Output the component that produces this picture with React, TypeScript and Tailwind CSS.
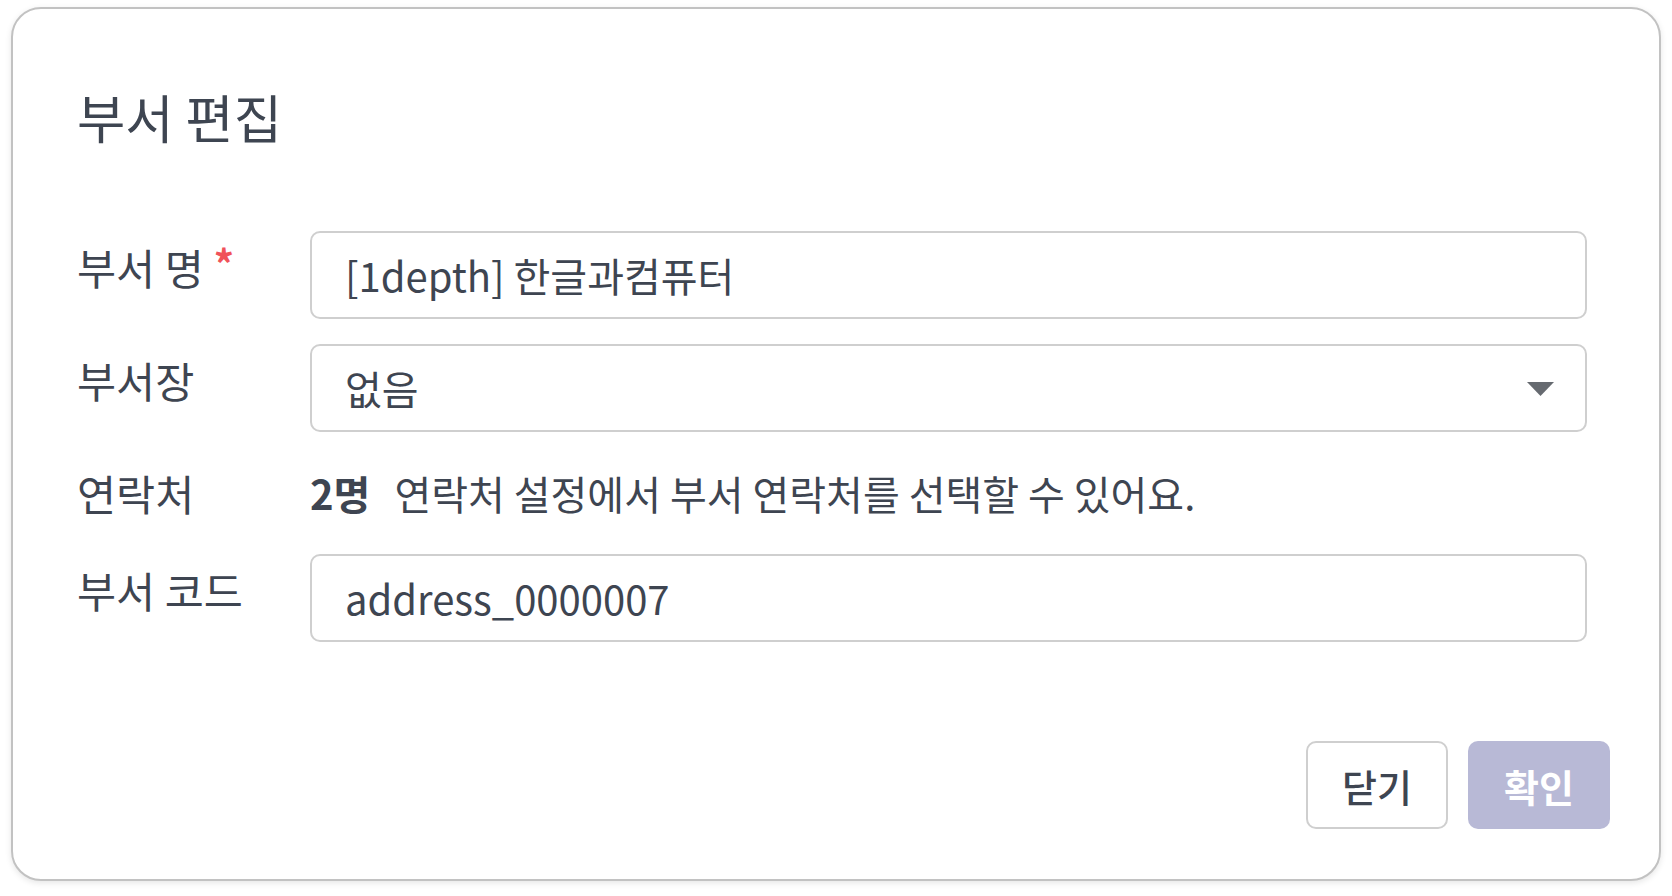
type FieldRowProps = {
  label: string;
  required?: boolean;
  children: React.ReactNode;
  tall?: boolean;
};

function FieldRow({ label, required, children, tall = true }: FieldRowProps) {
  return (
    <div className={`flex items-start ${tall ? "h-[88px]" : "h-[72px]"}`}>
      <div className="w-[233px] shrink-0 pt-[6px] text-[42.5px] leading-[60px] text-[#3e4551]">
        {label}
        {required ? <span className="relative top-[-5px] ml-[10px] text-[40px] font-bold text-[#f0525a]">*</span> : null}
      </div>
      <div className="flex-1">{children}</div>
    </div>
  );
}

function TextBox({ value }: { value: string }) {
  return (
    <div className="flex h-[88px] items-center rounded-[10px] border-2 border-[#cfcfcf] bg-white px-[33px] text-[40px] text-[#3e4551]">
      {value}
    </div>
  );
}

export default function App() {
  return (
    <div className="min-h-screen bg-white pl-[11px] pt-[7px] font-['Noto_Sans_CJK_KR','Noto_Sans',sans-serif]">
      <div className="flex h-[874px] w-[1650px] flex-col rounded-[30px] border-2 border-[#c2c2c2] bg-white shadow-[0_2px_6px_rgba(0,0,0,0.10)]">
        <h1 className="pl-[64px] pt-[70px] text-[52.5px] font-normal leading-[75px] text-[#3e4551]">부서 편집</h1>

        <div className="mt-[77px] flex flex-col gap-[25px] pl-[64px] pr-[72px]">
          <FieldRow label="부서 명" required>
            <TextBox value="[1depth] 한글과컴퓨터" />
          </FieldRow>
          <FieldRow label="부서장">
            <div className="flex h-[88px] items-center justify-between rounded-[10px] border-2 border-[#cfcfcf] bg-white pl-[33px] pr-[31px] text-[40px] text-[#3e4551]">
              <span>없음</span>
              <svg width="27" height="14" viewBox="0 0 27 14" className="mt-[2px]">
                <polygon points="0,0 27,0 13.5,14" fill="#666a70" />
              </svg>
            </div>
          </FieldRow>
          <FieldRow label="연락처" tall={false}>
            <div className="flex h-[72px] items-center text-[40px] text-[#3e4551]">
              <span className="font-bold">2명</span>
              <span className="ml-[24px]">연락처 설정에서 부서 연락처를 선택할 수 있어요.</span>
            </div>
          </FieldRow>
          <FieldRow label="부서 코드">
            <TextBox value="address_0000007" />
          </FieldRow>
        </div>

        <div className="mt-auto flex justify-end gap-[20px] pb-[50px] pr-[49px]">
          <button
            type="button"
            className="h-[88px] w-[142px] rounded-[10px] border-2 border-[#cfcfcf] bg-white text-[38px] font-medium text-[#3e4551]"
          >
            닫기
          </button>
          <button
            type="button"
            className="h-[88px] w-[142px] rounded-[10px] bg-[#b8b9d6] text-[38px] font-bold text-white"
          >
            확인
          </button>
        </div>
      </div>
    </div>
  );
}
